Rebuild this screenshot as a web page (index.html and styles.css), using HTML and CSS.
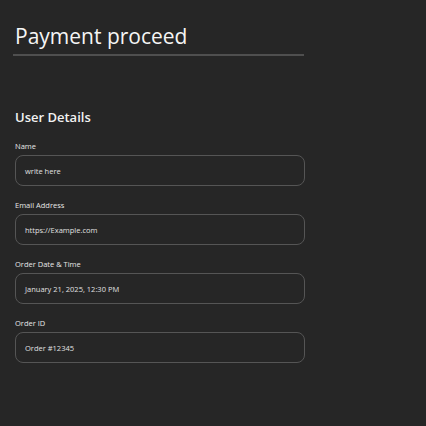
FILE: index.html
```html
<!DOCTYPE html>
<html>
<head>
<meta charset="utf-8">
<link rel="stylesheet" href="styles.css">
</head>
<body>
<div class="page">
  <header class="header">
    <h1 class="title">Payment proceed</h1>
  </header>
  <section class="details">
    <h2 class="section-title">User Details</h2>
    <div class="field">
      <label class="label">Name</label>
      <div class="input">write here</div>
    </div>
    <div class="field">
      <label class="label">Email Address</label>
      <div class="input">https://Example.com</div>
    </div>
    <div class="field">
      <label class="label">Order Date &amp; Time</label>
      <div class="input">January 21, 2025, 12:30 PM</div>
    </div>
    <div class="field">
      <label class="label">Order ID</label>
      <div class="input">Order #12345</div>
    </div>
  </section>
</div>
</body>
</html>
```

FILE: styles.css
```css
html, body {
  margin: 0;
  padding: 0;
  background: #262626;
  height: 100%;
}
body {
  font-family: "Open Sans", "Noto Sans", sans-serif;
  color: #f2f2f2;
}
.page {
  padding: 21px 0 0 13px;
}
.header {
  width: 291px;
  border-bottom: 2px solid #4f4f4f;
  padding-bottom: 3px;
}
.title {
  margin: 0;
  padding-left: 2px;
  font-size: 21px;
  font-weight: 500;
  line-height: 30px;
  color: #f5f5f5;
}
.details {
  padding-left: 2px;
  width: 290px;
  margin-top: 52px;
}
.section-title {
  margin: 0 0 14px;
  font-size: 13px;
  font-weight: 600;
  line-height: 18px;
  color: #f2f2f2;
}
.field {
  display: flex;
  flex-direction: column;
  margin-bottom: 13px;
}
.label {
  font-size: 7.5px;
  font-weight: 500;
  line-height: 12px;
  color: #e6e6e6;
  margin-bottom: 3px;
}
.input {
  box-sizing: border-box;
  height: 31px;
  border: 1px solid #555555;
  border-radius: 8px;
  padding: 0 9px;
  display: flex;
  align-items: center;
  font-size: 7.5px;
  color: #e0e0e0;
}
```
